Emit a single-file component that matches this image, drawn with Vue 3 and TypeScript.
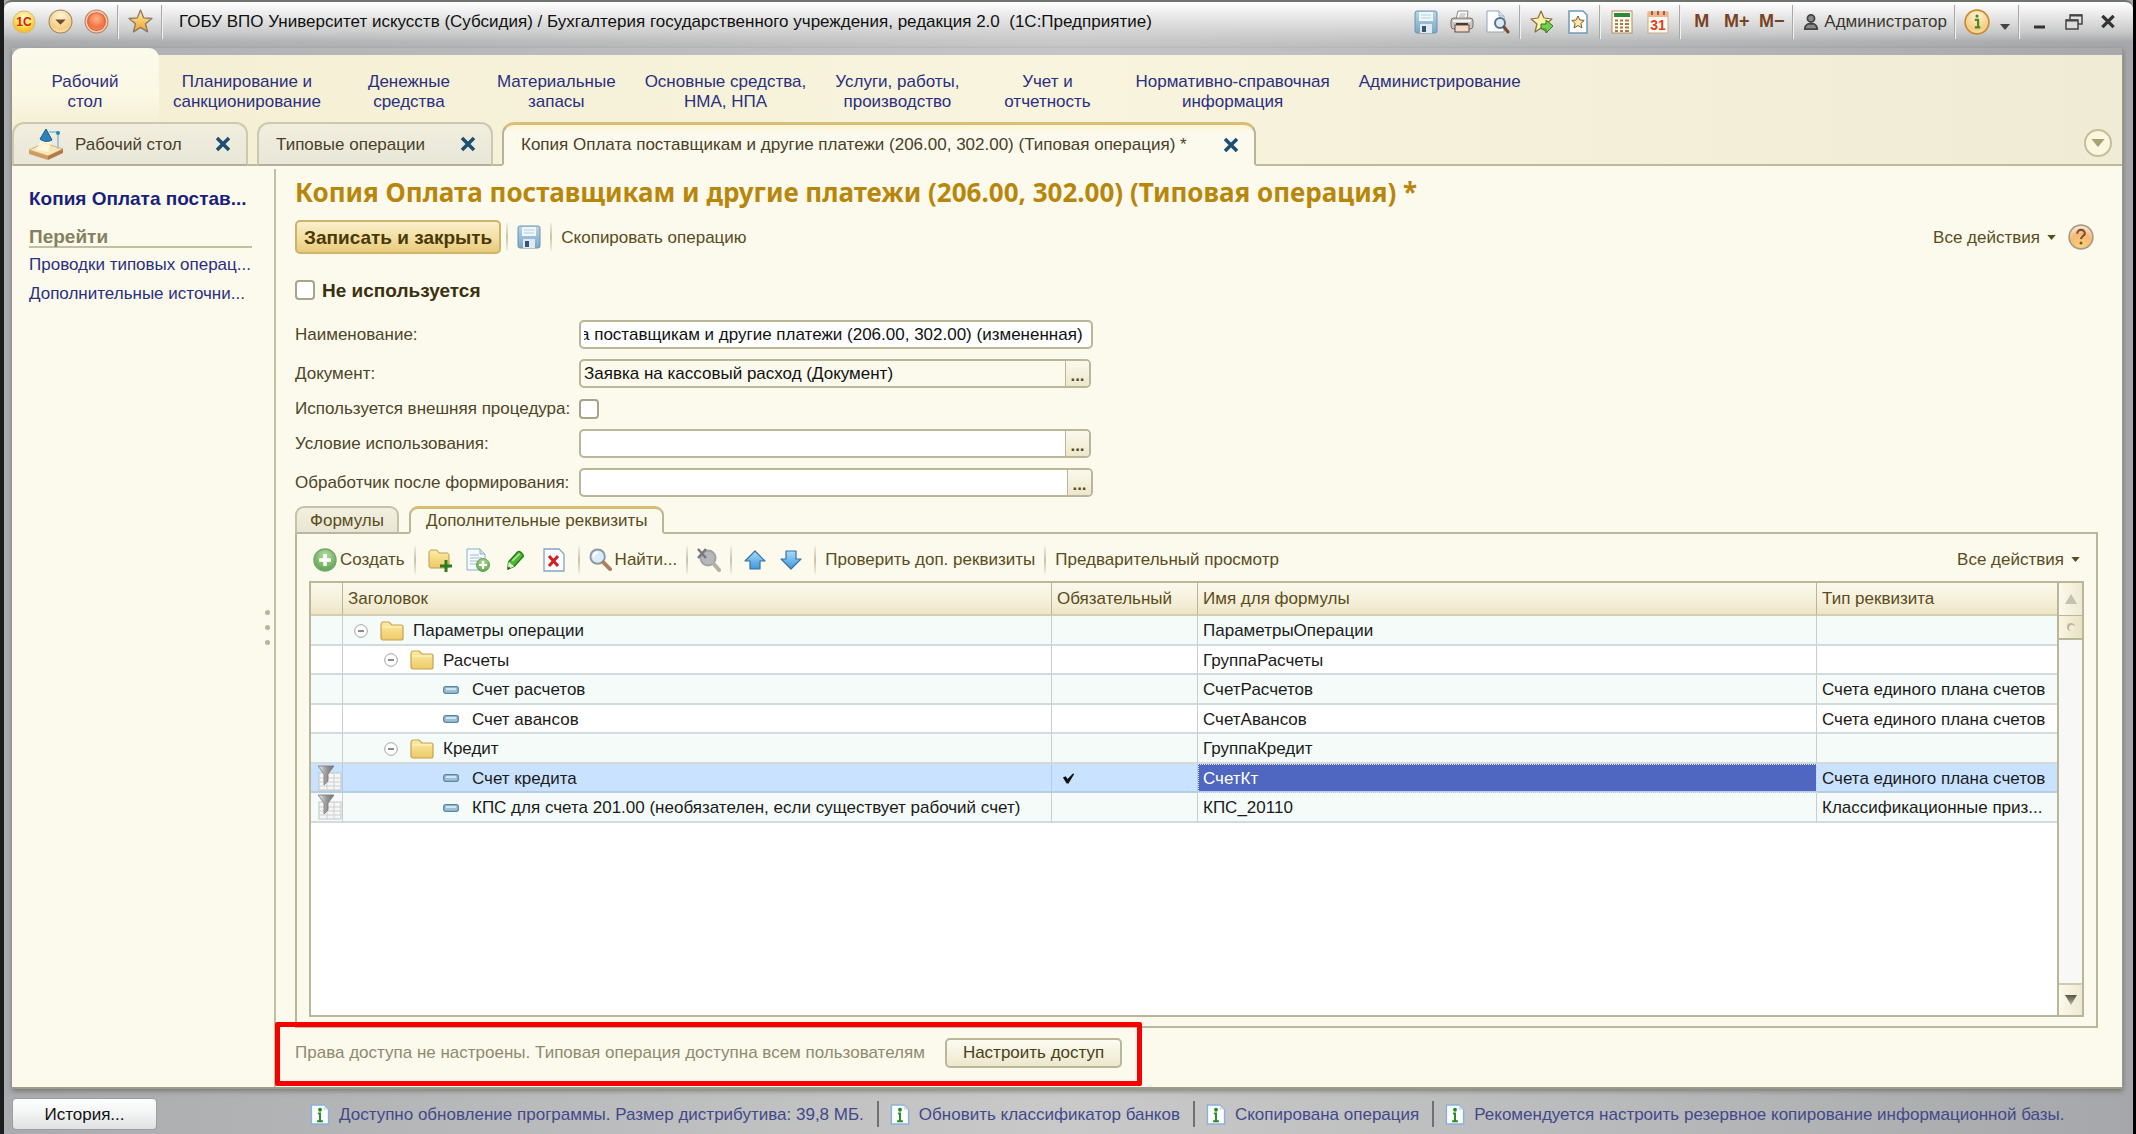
<script setup lang="ts">
import { onMounted, ref } from 'vue'

interface Row {
  level: number
  folder: boolean
  title: string
  required?: boolean
  name: string
  type: string
  filter?: boolean
  selected?: boolean
}

const sections: string[][] = [
  ['Рабочий', 'стол'],
  ['Планирование и', 'санкционирование'],
  ['Денежные', 'средства'],
  ['Материальные', 'запасы'],
  ['Основные средства,', 'НМА, НПА'],
  ['Услуги, работы,', 'производство'],
  ['Учет и', 'отчетность'],
  ['Нормативно-справочная', 'информация'],
  ['Администрирование'],
]

const rows: Row[] = [
  { level: 0, folder: true, title: 'Параметры операции', name: 'ПараметрыОперации', type: '' },
  { level: 1, folder: true, title: 'Расчеты', name: 'ГруппаРасчеты', type: '' },
  { level: 2, folder: false, title: 'Счет расчетов', name: 'СчетРасчетов', type: 'Счета единого плана счетов' },
  { level: 2, folder: false, title: 'Счет авансов', name: 'СчетАвансов', type: 'Счета единого плана счетов' },
  { level: 1, folder: true, title: 'Кредит', name: 'ГруппаКредит', type: '' },
  { level: 2, folder: false, title: 'Счет кредита', name: 'СчетКт', type: 'Счета единого плана счетов', required: true, filter: true, selected: true },
  { level: 2, folder: false, title: 'КПС для счета 201.00 (необязателен, если существует рабочий счет)', name: 'КПС_20110', type: 'Классификационные приз...', filter: true },
]

const notices: string[] = [
  'Доступно обновление программы. Размер дистрибутива: 39,8 МБ.',
  'Обновить классификатор банков',
  'Скопирована операция',
  'Рекомендуется настроить резервное копирование информационной базы.',
]

const unused = ref(false)
const external = ref(false)
const name = ref('Копия Оплата поставщикам и другие платежи (206.00, 302.00) (измененная)')
const documentRef = ref('Заявка на кассовый расход (Документ)')
const condition = ref('')
const handler = ref('')
const nameInput = ref<HTMLInputElement | null>(null)

onMounted(() => {
  const el = nameInput.value
  if (el) el.scrollLeft = el.scrollWidth
})
</script>

<template>
  <div class="window">
    <svg class="sprite" aria-hidden="true">
      <defs>
        <radialGradient id="gYellow" cx=".5" cy=".3" r=".7"><stop offset="0" stop-color="#fffbd0" /><stop offset=".6" stop-color="#fbdc55" /><stop offset="1" stop-color="#f3b51c" /></radialGradient>
        <radialGradient id="gSand" cx=".5" cy=".25" r=".8"><stop offset="0" stop-color="#fff3d6" /><stop offset=".7" stop-color="#f4cd86" /><stop offset="1" stop-color="#fde9a8" /></radialGradient>
        <radialGradient id="gRed" cx=".5" cy=".35" r=".7"><stop offset="0" stop-color="#ffb48a" /><stop offset=".7" stop-color="#f2703f" /><stop offset="1" stop-color="#ffa878" /></radialGradient>
        <radialGradient id="gHelp" cx=".5" cy=".9" r=".9"><stop offset="0" stop-color="#ffd277" /><stop offset=".6" stop-color="#f5b876" /><stop offset="1" stop-color="#fff0dc" /></radialGradient>
        <radialGradient id="gGreen" cx=".5" cy=".3" r=".8"><stop offset="0" stop-color="#b9dca0" /><stop offset="1" stop-color="#4e9d3f" /></radialGradient>
        <linearGradient id="gStar" x2="0" y2="1"><stop offset="0" stop-color="#fff0a0" /><stop offset="1" stop-color="#f0a02c" /></linearGradient>
        <linearGradient id="gDisk" x2="0" y2="1"><stop offset="0" stop-color="#b9d6e8" /><stop offset="1" stop-color="#7aa6c4" /></linearGradient>
        <linearGradient id="gFolder" x2="0" y2="1"><stop offset="0" stop-color="#fdeba6" /><stop offset="1" stop-color="#ecca68" /></linearGradient>
        <linearGradient id="gBlue" x2="0" y2="1"><stop offset="0" stop-color="#a8dcf8" /><stop offset="1" stop-color="#3f97dc" /></linearGradient>
        <linearGradient id="gFunnel"><stop offset="0" stop-color="#f2f2f2" /><stop offset=".5" stop-color="#9b9b9b" /><stop offset="1" stop-color="#6f6f6f" /></linearGradient>
        <linearGradient id="gTri" x2="0" y2="1"><stop offset="0" stop-color="#55524a" /><stop offset="1" stop-color="#b8b5a8" /></linearGradient>
      </defs>
      <symbol id="disk" viewBox="0 0 24 24"><rect x="1" y="1" width="22" height="22" rx="2" fill="url(#gDisk)" stroke="#6c94b0" /><rect x="5" y="2" width="14" height="9" fill="#eef7fc" /><path d="M7 5h10M7 8h10" stroke="#b5cfdf" /><rect x="6" y="14" width="12" height="9" fill="#dfe8ee" /><rect x="8" y="16" width="4" height="6" fill="#35566d" /></symbol>
      <symbol id="printer" viewBox="0 0 24 24"><path d="M6 9 8 1h10l-1 8z" fill="#fff" stroke="#888" /><path d="M10 4h6M9 6h6" stroke="#aaa" /><rect x="1" y="8" width="22" height="11" rx="3" fill="#c9c5c2" stroke="#77706c" /><path d="M3 11h18" stroke="#f4f2f0" stroke-width="2" /><rect x="5" y="15" width="14" height="7" fill="#f2d7c2" stroke="#5d4f49" /><path d="M6 14h12" stroke="#443a36" stroke-width="2" /></symbol>
      <symbol id="preview" viewBox="0 0 24 24"><path d="M1 1h12l5 5v16H1z" fill="#fff" stroke="#8da6bd" /><path d="M13 1v5h5" fill="#dce8f2" stroke="#8da6bd" /><circle cx="14" cy="13" r="5" fill="#d4e9f6" fill-opacity=".9" stroke="#56718a" stroke-width="2" /><path d="m18 17 4 5" stroke="#7a4a2c" stroke-width="3" stroke-linecap="round" /></symbol>
      <symbol id="star" viewBox="0 0 24 24"><path d="m12 1 3 7.500 8 .6-6.200 5.100 2 7.800-6.800-4.300L5.200 22l2-7.800L1 9.100l8-.6z" fill="url(#gStar)" stroke="#8c7a64" stroke-width="1.300" stroke-linejoin="round" /></symbol>
      <symbol id="starGo" viewBox="0 0 24 24"><path d="m11 1 3 7 8 1-6 5 1 8-6-4-6 4 2-8-6-5 7-1z" fill="#fff0b0" stroke="#8c6c3c" stroke-width="1.200" stroke-linejoin="round" /><path d="M11 14h5v-4l7 6-7 7v-4h-5z" fill="#74d04a" stroke="#29801c" /></symbol>
      <symbol id="docStar" viewBox="0 0 24 24"><path d="M3 1h14l4 4v18H3z" fill="#fff" stroke="#6e9abb" stroke-width="1.500" /><path d="m12 6 1.800 4 4.400.4-3.300 3 1 4.600-3.900-2.500L8.100 18l1-4.600-3.300-3 4.400-.4z" fill="#ffe9b0" stroke="#805a20" /></symbol>
      <symbol id="calc" viewBox="0 0 24 24"><rect x="2" y="1" width="20" height="22" fill="#fffdf0" stroke="#b08c64" /><rect x="4" y="3" width="16" height="4" fill="#2e8a34" /><path d="M5 10.500h3m2 0h3m2 0h4M5 14h3m2 0h3m2 0h4M5 17.500h3m2 0h3m2 0h4M5 21h3m2 0h3m2 0h4" stroke="#a8794c" stroke-width="2" /></symbol>
      <symbol id="person" viewBox="0 0 18 20"><circle cx="9" cy="6" r="4" fill="#8a8a8a" stroke="#444" stroke-width="2" /><path d="M2 18c0-4 2-5 4-6h6c2 1 4 2 4 6z" fill="#8a8a8a" stroke="#444" stroke-width="2" /></symbol>
      <symbol id="info" viewBox="0 0 24 24"><circle cx="12" cy="12" r="11" fill="url(#gSand)" stroke="#c98a2c" stroke-width="1.500" /><path d="M10 10h3v7m-3 0h5" fill="none" stroke="#4b8a20" stroke-width="2" /><circle cx="12" cy="6.500" r="1.500" fill="#4b8a20" /></symbol>
      <symbol id="help" viewBox="0 0 24 24"><circle cx="12" cy="12" r="11" fill="url(#gHelp)" stroke="#a89a8c" stroke-width="1.500" /><path d="M8.500 9c0-5 7.500-4.500 7 0-.3 2-3.300 2.400-3.500 5" fill="none" stroke="#7b5433" stroke-width="2" /><circle cx="12" cy="17.500" r="1.400" fill="#7b5433" /></symbol>
      <symbol id="desk" viewBox="0 0 36 32"><path d="M1 22 16 15l19 6-15 7z" fill="#fbe3ba" stroke="#dcae72" /><path d="m1 22 19 6v4L1 26z" fill="#cf9c62" /><path d="m20 28 15-7v4l-15 7z" fill="#b27b45" /><path d="m13 12-5 10 12 2 4-12z" fill="#fffbe0" opacity=".8" /><path d="m12 11 6-10 6 11c-3 2-9 2-12-1z" fill="#2d82b8" stroke="#175c8a" /><path d="M21 4h9v17" fill="none" stroke="#9fc9e2" stroke-width="2" /><circle cx="30" cy="5" r="2" fill="#2d82b8" /></symbol>
      <symbol id="cross" viewBox="0 0 16 16"><path d="m2 2 12 12M14 2 2 14" stroke="currentColor" stroke-width="3.500" /></symbol>
      <symbol id="add" viewBox="0 0 24 24"><circle cx="12" cy="12" r="11" fill="url(#gGreen)" stroke="#75a873" stroke-width="1.500" /><path d="M12 6v12M6 12h12" stroke="#fff" stroke-width="3.500" /></symbol>
      <symbol id="folder" viewBox="0 0 24 20"><path d="M1 4c0-2 1-3 2-3h6l3 3h9c1 0 2 1 2 2v11c0 1-1 2-2 2H3c-1 0-2-1-2-2z" fill="url(#gFolder)" stroke="#c9a24a" stroke-width="1.200" /><path d="M2 6h20" stroke="#fff6cc" /></symbol>
      <symbol id="folderAdd" viewBox="0 0 24 24"><path d="M1 5c0-2 1-3 2-3h6l2 3h8c1 0 2 1 2 2v11c0 1-1 2-2 2H3c-1 0-2-1-2-2z" fill="url(#gFolder)" stroke="#c09a48" /><path d="M18 12v12M12 18h12" stroke="#2c7c20" stroke-width="3" /></symbol>
      <symbol id="docAdd" viewBox="0 0 24 24"><path d="M1 1h13l5 5v16H1z" fill="#f5fafd" stroke="#8fafc8" /><path d="M4 7h9M4 10h12M4 13h8M4 16h6" stroke="#a4bdd0" /><path d="M14 1v5h5" fill="#cfe0ed" stroke="#8fafc8" /><circle cx="17" cy="17" r="6.500" fill="url(#gGreen)" stroke="#65a05e" /><path d="M17 13v8M13 17h8" stroke="#fff" stroke-width="2.200" /></symbol>
      <symbol id="pencil" viewBox="0 0 24 24"><path d="m4 14 10-11c2-1 6 2 6 5L10 19l-7 3z" fill="#4fb63a" stroke="#237a18" stroke-width="1.500" stroke-linejoin="round" /><path d="m4 14 6 5-7 3z" fill="#dff3c8" /><path d="m3 22 1-3 2 2z" fill="#222" /><path d="m8 13 8-8" stroke="#a6e58a" stroke-width="2" /></symbol>
      <symbol id="docDel" viewBox="0 0 24 24"><path d="M2 1h15l5 5v17H2z" fill="#fafdff" stroke="#82a5c3" stroke-width="1.300" /><path d="m7 8 9 10m0-10L7 18" stroke="#d42020" stroke-width="3" /></symbol>
      <symbol id="find" viewBox="0 0 24 24"><circle cx="9" cy="9" r="7.500" fill="#dcedf9" stroke="#8b98a8" stroke-width="2" /><path d="M5 9c0-3 2-4 4-4" fill="none" stroke="#fff" stroke-width="2" /><path d="m15 15 7 7" stroke="#b57d5c" stroke-width="4" stroke-linecap="round" /></symbol>
      <symbol id="findOff" viewBox="0 0 24 24"><circle cx="11" cy="10" r="7.500" fill="#b5b7bb" stroke="#a0a2a6" stroke-width="2" /><path d="m16 15 6 7" stroke="#b4b0a8" stroke-width="4" stroke-linecap="round" /><path d="m1 1 8 9M9 1 1 10" stroke="#77787c" stroke-width="2.500" /></symbol>
      <symbol id="up" viewBox="0 0 22 22"><path d="m11 2 10 10h-5v8H6v-8H1z" fill="url(#gBlue)" stroke="#3672a8" stroke-width="1.200" stroke-linejoin="round" /></symbol>
      <symbol id="down" viewBox="0 0 22 22"><path d="M11 20 1 10h5V2h10v8h5z" fill="url(#gBlue)" stroke="#3672a8" stroke-width="1.200" stroke-linejoin="round" /></symbol>
      <symbol id="minus" viewBox="0 0 14 14"><circle cx="7" cy="7" r="6.300" fill="#fff" stroke="#a2a2a2" /><path d="M4 7h6" stroke="#666" stroke-width="1.500" /></symbol>
      <symbol id="item" viewBox="0 0 16 8"><rect x=".7" y=".7" width="14.600" height="6.600" rx="2" fill="#9cc0d8" stroke="#5d86a0" stroke-width="1.300" /><path d="M3 3h10" stroke="#e2f2fb" stroke-width="1.500" /></symbol>
      <symbol id="filter" viewBox="0 0 24 26"><rect x="1" y="8" width="22" height="17" fill="#f6f6f6" stroke="#c4c4c4" /><path d="M1 13h22M1 17h22M1 21h22M9 8v17M16 8v17" stroke="#cfcfcf" /><path d="M0 1h16l-6 8v7l-4 4V9z" fill="url(#gFunnel)" stroke="#777" stroke-width=".8" /></symbol>
      <symbol id="check" viewBox="0 0 14 12"><path d="M1 5.500 4 4l2 3 6-6 1 1-6 10H5z" fill="#111" /></symbol>
      <symbol id="note" viewBox="0 0 20 22"><path d="M1 1h13l5 5v15H1z" fill="#fbfdff" stroke="#8db0d8" stroke-width="1.500" /><path d="M14 1v5h5" fill="#cfe0f2" /><circle cx="10" cy="6" r="2" fill="#258a1c" /><path d="M10 9v9m-2-8h3m-4 8h6" fill="none" stroke="#258a1c" stroke-width="2" /></symbol>
      <symbol id="tri" viewBox="0 0 10 6"><path d="M0 0h10L5 6z" fill="currentColor" /></symbol>
    </svg>

    <header class="titlebar">
      <button class="tb" aria-label="1С"><svg width="24" height="24" viewBox="0 0 24 24"><circle cx="12" cy="12" r="11" fill="url(#gYellow)" stroke="#d4b878" /><text x="12" y="16" text-anchor="middle" font-family="Liberation Sans, sans-serif" font-size="12" font-weight="700" fill="#d8200c">1С</text></svg></button>
      <button class="tb" aria-label="Меню"><svg width="25" height="25" viewBox="0 0 24 24"><circle cx="12" cy="12" r="11" fill="url(#gSand)" stroke="#a5835c" /><path d="M7 10h10l-5 5z" fill="#6e4e28" /></svg></button>
      <button class="tb" aria-label="Стоп"><svg width="25" height="25" viewBox="0 0 24 24"><circle cx="12" cy="12" r="11" fill="#f6c9ae" stroke="#b58062" /><circle cx="12" cy="12" r="8.500" fill="url(#gRed)" stroke="#dc5a30" /></svg></button>
      <i class="tsep"></i>
      <button class="tb" aria-label="Избранное"><svg width="25" height="25"><use href="#star" /></svg></button>
      <i class="tsep"></i>
      <span class="caption">ГОБУ ВПО Университет искусств (Субсидия) / Бухгалтерия государственного учреждения, редакция 2.0&nbsp; (1С:Предприятие)</span>
      <button class="tb" aria-label="Сохранить"><svg width="24" height="24"><use href="#disk" /></svg></button>
      <button class="tb" aria-label="Печать"><svg width="24" height="24"><use href="#printer" /></svg></button>
      <button class="tb" aria-label="Просмотр"><svg width="26" height="24"><use href="#preview" /></svg></button>
      <i class="tsep"></i>
      <button class="tb" aria-label="Добавить в избранное"><svg width="24" height="24"><use href="#starGo" /></svg></button>
      <button class="tb" aria-label="Список избранного"><svg width="24" height="24"><use href="#docStar" /></svg></button>
      <i class="tsep"></i>
      <button class="tb" aria-label="Калькулятор"><svg width="24" height="24"><use href="#calc" /></svg></button>
      <button class="tb" aria-label="Календарь"><svg width="24" height="24" viewBox="0 0 24 24"><rect x="2" y="2" width="20" height="21" fill="#fffaf2" stroke="#c8a98a" /><path d="M2 2h20v5H2z" fill="#f0b48e" /><path d="M6 1v4m6-4v4m6-4v4" stroke="#a65c37" stroke-width="2" /><text x="12" y="20" text-anchor="middle" font-family="Liberation Sans, sans-serif" font-size="14" font-weight="700" fill="#e0401c">31</text></svg></button>
      <i class="tsep"></i>
      <button class="tb mem">M</button>
      <button class="tb mem">M+</button>
      <button class="tb mem">M−</button>
      <i class="tsep"></i>
      <button class="user"><svg width="16" height="18"><use href="#person" /></svg>Администратор</button>
      <i class="tsep"></i>
      <button class="tb" aria-label="Справка"><svg width="26" height="26"><use href="#info" /></svg></button>
      <button class="more" aria-label="Еще"><svg width="12" height="6"><use href="#tri" /></svg></button>
      <i class="tsep"></i>
      <button class="wb" aria-label="Свернуть"><svg width="18" height="18" viewBox="0 0 18 18"><path d="M3 14h11" stroke="#333" stroke-width="3" /></svg></button>
      <button class="wb" aria-label="Развернуть"><svg width="18" height="18" viewBox="0 0 18 18"><path d="M5 6V2h12v9h-4" fill="none" stroke="#444" stroke-width="1.500" /><path d="M5 2.500h12" stroke="#444" stroke-width="2" /><path d="M1 7h12v9H1z" fill="#ddd" stroke="#444" stroke-width="1.500" /><path d="M1 7.500h12" stroke="#444" stroke-width="2" /></svg></button>
      <button class="wb" aria-label="Закрыть"><svg width="16" height="15"><use href="#cross" /></svg></button>
    </header>

    <div class="frame">
      <nav class="sections">
        <a v-for="(s, i) in sections" :key="i" href="#" class="section" :class="{ current: i === 0 }"><span v-for="line in s" :key="line">{{ line }}</span></a>
      </nav>

      <div class="tabs">
        <div class="tab desktop"><svg width="36" height="32"><use href="#desk" /></svg><span>Рабочий стол</span><button class="x" aria-label="Закрыть вкладку"><svg width="16" height="16"><use href="#cross" /></svg></button></div>
        <div class="tab"><span>Типовые операции</span><button class="x" aria-label="Закрыть вкладку"><svg width="16" height="16"><use href="#cross" /></svg></button></div>
        <div class="tab active"><span>Копия Оплата поставщикам и другие платежи (206.00, 302.00) (Типовая операция) *</span><button class="x" aria-label="Закрыть вкладку"><svg width="16" height="16"><use href="#cross" /></svg></button></div>
        <div class="fill"></div>
        <button class="roll" aria-label="Список вкладок"><svg width="14" height="8"><use href="#tri" /></svg></button>
      </div>

      <div class="body">
        <aside class="side">
          <a href="#" class="here">Копия Оплата постав...</a>
          <h2>Перейти</h2>
          <a href="#">Проводки типовых операц...</a>
          <a href="#">Дополнительные источни...</a>
          <div class="grip"><i></i><i></i><i></i></div>
        </aside>

        <main class="main">
          <h1>Копия Оплата поставщикам и другие платежи (206.00, 302.00) (Типовая операция) *</h1>

          <div class="commands">
            <button class="primary">Записать и закрыть</button>
            <i class="sep"></i>
            <button class="ib" aria-label="Записать"><svg width="24" height="24"><use href="#disk" /></svg></button>
            <i class="sep"></i>
            <button class="link">Скопировать операцию</button>
            <span class="grow"></span>
            <button class="link all">Все действия<svg width="9" height="5"><use href="#tri" /></svg></button>
            <button class="help" aria-label="Справка"><svg width="26" height="26"><use href="#help" /></svg></button>
          </div>

          <label class="unused"><input v-model="unused" type="checkbox" class="box">Не используется</label>

          <form class="fields" @submit.prevent>
            <label for="f-name">Наименование:</label>
            <div class="edit wide"><input id="f-name" ref="nameInput" v-model="name" type="text"></div>
            <label for="f-doc">Документ:</label>
            <div class="edit readonly"><input id="f-doc" v-model="documentRef" type="text" readonly><button type="button">...</button></div>
            <label for="f-ext">Используется внешняя процедура:</label>
            <input id="f-ext" v-model="external" type="checkbox" class="box">
            <label for="f-cond">Условие использования:</label>
            <div class="edit"><input id="f-cond" v-model="condition" type="text"><button type="button">...</button></div>
            <label for="f-hand">Обработчик после формирования:</label>
            <div class="edit wide"><input id="f-hand" v-model="handler" type="text"><button type="button">...</button></div>
          </form>

          <div class="pages">
            <button class="page">Формулы</button>
            <button class="page on">Дополнительные реквизиты</button>
          </div>

          <section class="panel">
            <div class="toolbar">
              <button class="link create"><svg width="24" height="24"><use href="#add" /></svg>Создать</button>
              <i class="sep"></i>
              <button class="ib" aria-label="Создать группу"><svg width="24" height="24"><use href="#folderAdd" /></svg></button>
              <button class="ib" aria-label="Скопировать"><svg width="24" height="24"><use href="#docAdd" /></svg></button>
              <button class="ib" aria-label="Изменить"><svg width="22" height="22"><use href="#pencil" /></svg></button>
              <button class="ib" aria-label="Пометить на удаление"><svg width="24" height="24"><use href="#docDel" /></svg></button>
              <i class="sep"></i>
              <button class="link create"><svg width="23" height="23"><use href="#find" /></svg>Найти...</button>
              <i class="sep"></i>
              <button class="ib slim" aria-label="Отменить поиск"><svg width="24" height="24"><use href="#findOff" /></svg></button>
              <i class="sep"></i>
              <button class="ib mid" aria-label="Вверх"><svg width="22" height="22"><use href="#up" /></svg></button>
              <button class="ib mid" aria-label="Вниз"><svg width="22" height="22"><use href="#down" /></svg></button>
              <i class="sep"></i>
              <button class="link">Проверить доп. реквизиты</button>
              <i class="sep"></i>
              <button class="link">Предварительный просмотр</button>
              <span class="grow"></span>
              <button class="link all">Все действия<svg width="9" height="5"><use href="#tri" /></svg></button>
            </div>

            <div class="grid">
              <div class="scroll">
                <table>
                  <colgroup><col class="c0"><col class="c1"><col class="c2"><col class="c3"><col class="c4"></colgroup>
                  <thead>
                    <tr><th></th><th>Заголовок</th><th>Обязательный</th><th>Имя для формулы</th><th>Тип реквизита</th></tr>
                  </thead>
                  <tbody>
                    <tr v-for="r in rows" :key="r.name" :class="{ selected: r.selected }">
                      <td class="mark"><svg v-if="r.filter" width="24" height="26"><use href="#filter" /></svg></td>
                      <td>
                        <div class="node" :class="'level' + r.level">
                          <template v-if="r.folder"><svg width="14" height="14"><use href="#minus" /></svg><svg class="fold" width="24" height="20"><use href="#folder" /></svg></template>
                          <svg v-else class="leaf" width="16" height="8"><use href="#item" /></svg>
                          <span>{{ r.title }}</span>
                        </div>
                      </td>
                      <td class="flag"><svg v-if="r.required" width="13" height="12"><use href="#check" /></svg></td>
                      <td :class="{ cursor: r.selected }">{{ r.name }}</td>
                      <td>{{ r.type }}</td>
                    </tr>
                  </tbody>
                </table>
              </div>
              <div class="bar">
                <button class="arrow" aria-label="Прокрутить вверх"><svg width="12" height="12" viewBox="0 0 12 12"><path d="m6 1 6 10H0z" fill="#c4c0b4" /></svg></button>
                <div class="thumb"><svg width="10" height="10" viewBox="0 0 10 10"><circle cx="5" cy="5" r="4" fill="#bdb79f" /><circle cx="6" cy="6" r="3" fill="#f2edd6" /></svg></div>
                <div class="track"></div>
                <button class="arrow end" aria-label="Прокрутить вниз"><svg width="12" height="12" viewBox="0 0 12 12"><path d="M0 1h12L6 11z" fill="url(#gTri)" /></svg></button>
              </div>
            </div>
          </section>

          <div class="rights">
            <span>Права доступа не настроены. Типовая операция доступна всем пользователям</span>
            <button>Настроить доступ</button>
            <div class="outline"></div>
          </div>
        </main>
      </div>
    </div>

    <footer class="status">
      <button class="history">История...</button>
      <div class="notices">
        <a v-for="n in notices" :key="n" href="#"><svg width="20" height="21"><use href="#note" /></svg>{{ n }}</a>
      </div>
    </footer>
  </div>
</template>

<style>
body {
  margin: 0;
  background: #000;
}
</style>

<style scoped>
* {
  box-sizing: border-box;
}
.window {
  display: flex;
  flex-direction: column;
  min-height: 100vh;
  border-left: 4px solid #1c1c1c;
  border-right: 3px solid #000;
  background: linear-gradient(90deg, #a9abae 0, #b9babb 25%, #c9c9c9 50%, #b9babb 75%, #a5a7aa 100%);
  font: 17px/21px "Liberation Sans", Arial, sans-serif;
  color: #1b1b1b;
}
.sprite {
  position: absolute;
  width: 0;
  height: 0;
}
svg {
  display: block;
  flex: none;
}
a {
  color: #2b2f80;
  text-decoration: none;
}
button {
  margin: 0;
  padding: 0;
  border: 0;
  background: none;
  font: inherit;
  color: inherit;
}

/* Title bar */
.titlebar {
  display: flex;
  align-items: center;
  height: 48px;
  padding: 0 8px 7px 2px;
  border-top: 2px solid #70756a;
  border-radius: 8px 8px 0 0;
  background: linear-gradient(#fff 0, #f2f2f2 8px, rgba(215, 215, 215, 0.7) 30px, rgba(180, 182, 185, 0) 40px);
}
.tb {
  display: flex;
  flex: none;
  justify-content: center;
  align-items: center;
  width: 36px;
  height: 32px;
}
.tb.mem {
  width: 35px;
  font-weight: 700;
  font-size: 18px;
  color: #7a4222;
}
.tsep {
  flex: none;
  width: 2px;
  height: 34px;
  margin: 0 3px;
  border-left: 1px solid #a9a9a9;
  border-right: 1px solid #f2f2f2;
}
.caption {
  flex: 1;
  margin-left: 13px;
  overflow: hidden;
  white-space: nowrap;
  color: #111;
}
.user {
  display: flex;
  align-items: center;
  gap: 5px;
  padding: 0 4px 0 6px;
  white-space: nowrap;
  color: #3c372e;
}
.more {
  display: flex;
  justify-content: center;
  align-items: flex-end;
  width: 20px;
  height: 16px;
  color: #444;
}
.wb {
  display: flex;
  flex: none;
  justify-content: center;
  align-items: center;
  width: 34px;
  height: 30px;
  color: #333;
}

/* Sections */
.frame {
  display: flex;
  flex: 1;
  flex-direction: column;
  margin: 0 10px 0 8px;
  border-bottom: 2px solid #9c9c86;
  border-right: 1px solid #9c9c86;
  box-shadow: 0 2px 5px rgba(80, 80, 70, 0.6);
  background: linear-gradient(90deg, #f4efd3 0, #f8f4de 50%, #efebd4 100%);
  background-origin: border-box;
}
.sections {
  display: flex;
  height: 74px;
  background: linear-gradient(90deg, #adafb2 0, #c4c5c6 50%, #a7a9ac 100%) top / 100% 7px no-repeat;
}
.section {
  display: flex;
  flex-direction: column;
  align-items: center;
  min-width: 147px;
  padding: 24px 15px 0 14px;
  line-height: 20px;
  white-space: nowrap;
}
.section.current {
  border-radius: 10px 10px 0 0;
  background: linear-gradient(#fcfaec, #fbf8e4 60%, #f5f0d6);
}

/* Window tabs */
.tabs {
  display: flex;
  height: 44px;
  padding-right: 10px;
  background: linear-gradient(#bdb99c, #bdb99c) bottom / 100% 2px no-repeat;
}
.tab {
  display: flex;
  align-items: center;
  min-width: 236px;
  padding: 0 15px 0 17px;
  border: 2px solid #cdc9b0;
  border-bottom: 2px solid #b5b196;
  border-radius: 12px 12px 0 0;
  background: linear-gradient(#f1eedd, #e9e7d9);
  white-space: nowrap;
  color: #4a4026;
}
.tab + .tab {
  margin-left: 9px;
}
.tab span {
  flex: 1;
}
.tab.desktop {
  gap: 11px;
  padding-left: 14px;
}
.tab.active {
  gap: 36px;
  border-color: #b9b498;
  border-top: 3px solid #dcbd78;
  border-bottom-color: #fcfaec;
  background: linear-gradient(#fdf4d6, #fcfaec 8px);
}
.x {
  color: #1d4f73;
}
.fill {
  flex: 1;
}
.roll {
  display: flex;
  justify-content: center;
  align-items: center;
  width: 28px;
  height: 28px;
  margin-top: 7px;
  border: 2px solid #c5bf98;
  border-radius: 50%;
  background: #faf6df;
  color: #a8a272;
}

/* Body */
.body {
  display: flex;
  flex: 1;
  background: #fcfaec;
}
.side {
  position: relative;
  display: flex;
  flex-direction: column;
  width: 264px;
  padding: 19px 22px 0 17px;
  margin-top: 3px;
  border-right: 2px solid #c3bf9f;
  white-space: nowrap;
}
.side a {
  margin-top: 8px;
}
.side .here {
  margin-top: 0;
  font-weight: 700;
  font-size: 19px;
  color: #1a1f7c;
}
.side h2 {
  margin: 18px 0 0;
  border-bottom: 2px solid #c3bf9f;
  font-size: 19px;
  line-height: 19px;
  color: #858060;
}
.side h2 + a {
  margin-top: 6px;
}
.grip {
  position: absolute;
  top: 441px;
  right: 4px;
  display: flex;
  flex-direction: column;
  gap: 10px;
}
.grip i {
  width: 5px;
  height: 5px;
  border-radius: 50%;
  background: #b9b59a;
}
.main {
  display: flex;
  flex: 1;
  flex-direction: column;
  min-width: 0;
  padding: 10px 24px 0 19px;
}
h1 {
  margin: 0;
  font: 700 26px/32px "Noto Sans", "Open Sans", sans-serif;
  white-space: nowrap;
  color: #b8860b;
}
.commands,
.toolbar {
  display: flex;
  align-items: center;
  white-space: nowrap;
  color: #5a4c20;
}
.commands {
  height: 34px;
  margin-top: 12px;
}
.primary {
  height: 34px;
  padding: 0 7px;
  border: 2px solid #cfb468;
  border-radius: 5px;
  background: linear-gradient(#fbf0cc, #f3dda0 55%, #e8cb7c);
  font-weight: 700;
  font-size: 19px;
  color: #4a3a08;
}
.sep {
  width: 2px;
  height: 28px;
  margin: 0 5px;
  background: linear-gradient(rgba(200, 196, 170, 0.2), #c8c4aa 50%, rgba(200, 196, 170, 0.2));
}
.ib {
  display: flex;
  justify-content: center;
  align-items: center;
  width: 38px;
  height: 28px;
}
.ib.slim,
.commands .ib {
  width: 32px;
}
.ib.mid {
  width: 36px;
}
.link {
  padding: 0 4px;
}
.grow {
  flex: 1;
}
.all {
  display: flex;
  align-items: center;
  gap: 7px;
}
.help {
  margin-left: 8px;
  margin-right: 4px;
}
.box {
  appearance: none;
  width: 20px;
  height: 20px;
  margin: 0;
  border: 2px solid #a8a48a;
  border-radius: 4px;
  background: #fff;
}
.unused {
  display: flex;
  align-items: center;
  gap: 7px;
  height: 20px;
  margin-top: 26px;
  font-weight: 700;
  font-size: 19px;
  color: #3b3010;
}
.fields {
  display: grid;
  grid-template-columns: 284px auto;
  justify-content: start;
  align-items: center;
  row-gap: 10px;
  margin-top: 20px;
  white-space: nowrap;
  color: #4d4528;
}
.edit {
  display: flex;
  width: 512px;
  height: 29px;
  border: 2px solid #bab698;
  border-radius: 5px;
  background: #fff;
  overflow: hidden;
}
.edit.wide {
  width: 514px;
}
.edit.readonly {
  background: #fcfaec;
}
.edit input {
  flex: 1;
  min-width: 0;
  margin: 0 8px 0 3px;
  padding: 0;
  border: 0;
  outline: 0;
  background: none;
  font: inherit;
  color: #111;
}
.edit button {
  width: 24px;
  padding-top: 3px;
  border-left: 1px solid #bab698;
  background: linear-gradient(#fbf9ec, #ece7cc);
  font-weight: 700;
  color: #5a4c20;
}

/* Pages and panel */
.pages {
  display: flex;
  align-items: stretch;
  gap: 10px;
  height: 28px;
  margin-top: 9px;
  margin-bottom: -2px;
  z-index: 1;
}
.page {
  padding: 0 13px;
  border: 2px solid #c6c2a8;
  border-bottom-color: #bab698;
  border-radius: 9px 9px 0 0;
  background: linear-gradient(#f3f0df, #e8e5d4);
  color: #5a4c20;
}
.page.on {
  padding: 0 15px;
  border-color: #bab698;
  border-top: 3px solid #d9bb74;
  border-bottom-color: #fcfaec;
  background: #fcfaec;
}
.panel {
  display: flex;
  flex: 1;
  flex-direction: column;
  padding: 7px 12px 9px;
  border: 2px solid #bab698;
}
.toolbar {
  height: 40px;
  padding-bottom: 3px;
}
.create {
  display: flex;
  align-items: center;
  gap: 3px;
}
.grid {
  display: flex;
  flex: 1;
  border: 2px solid #bab698;
  background: #fff;
}
.scroll {
  flex: 1;
  min-width: 0;
}
table {
  width: 100%;
  border-spacing: 0;
  table-layout: fixed;
}
.c0 {
  width: 32px;
}
.c1 {
  width: 709px;
}
.c2 {
  width: 146px;
}
.c4 {
  width: 240px;
}
th,
td {
  height: 30px;
  padding: 1px 5px 0;
  border-right: 1px solid #c6cfd0;
  border-bottom: 2px solid #d3dadb;
  text-align: left;
  font-weight: 400;
  white-space: nowrap;
  overflow: hidden;
}
tr:nth-child(even) td {
  height: 29px;
}
th {
  height: 33px;
  padding-top: 0;
  border-right-color: #bab698;
  border-bottom-color: #d5ceae;
  background: linear-gradient(#fbf9ec, #f6f1dc 50%, #eee6c8);
  color: #5a4c20;
}
th:last-child,
td:last-child {
  border-right: 0;
}
tr:nth-child(odd) td {
  background: #f5fbf9;
}
tr.selected td {
  background: #c9e2ff;
  border-color: #b5cce2;
}
td.mark {
  padding: 0 0 0 7px;
}
tr td.cursor,
tr.selected td.cursor {
  background: #4f67c0;
  color: #fff;
  outline: 1px dotted #dfe6ff;
  outline-offset: -1px;
}
td.flag {
  padding-left: 10px;
}
.node {
  display: flex;
  align-items: center;
}
.fold {
  margin: 0 9px 0 12px;
}
.leaf {
  margin-right: 13px;
}
.level0 {
  padding-left: 6px;
}
.level1 {
  padding-left: 36px;
}
.level2 {
  padding-left: 95px;
}
.bar {
  display: flex;
  flex-direction: column;
  width: 25px;
  border-left: 2px solid #bab698;
  background: #f8f8f6;
}
.arrow {
  display: flex;
  justify-content: center;
  align-items: center;
  height: 32px;
  background: linear-gradient(90deg, #fbf9ec, #eee9d0);
}
.arrow.end {
  border-top: 2px solid #cfcbb0;
}
.thumb {
  display: flex;
  justify-content: center;
  align-items: center;
  height: 25px;
  border-top: 1px solid #bab698;
  border-bottom: 2px solid #bab698;
  background: linear-gradient(90deg, #f8f5e2, #e9e3c4);
}
.track {
  flex: 1;
}

/* Access rights */
.rights {
  position: relative;
  display: flex;
  align-items: center;
  gap: 20px;
  height: 59px;
  padding-bottom: 10px;
  white-space: nowrap;
  color: #8f8a6c;
}
.rights button {
  height: 30px;
  padding: 0 16px;
  border: 2px solid #bab698;
  border-radius: 5px;
  background: linear-gradient(#fdfcf2, #ece7cc);
  color: #4a3f18;
}
.outline {
  position: absolute;
  top: -6px;
  left: -20px;
  width: 867px;
  height: 64px;
  border: 5px solid #f60000;
  border-radius: 2px;
  pointer-events: none;
}

/* Status bar */
.status {
  display: flex;
  align-items: center;
  height: 45px;
  padding: 7px 8px 2px;
}
.history {
  width: 145px;
  height: 32px;
  border: 1px solid #9b9ea2;
  border-radius: 4px;
  background: linear-gradient(#fff, #f2f3f3 50%, #dfe1e2);
  color: #111;
}
.notices {
  display: flex;
  margin-left: 142px;
}
.notices a {
  display: flex;
  align-items: center;
  gap: 9px;
  height: 26px;
  padding: 0 13px 0 11px;
  white-space: nowrap;
  color: #43498a;
}
.notices a + a {
  border-left: 2px solid #6e7074;
}
</style>
